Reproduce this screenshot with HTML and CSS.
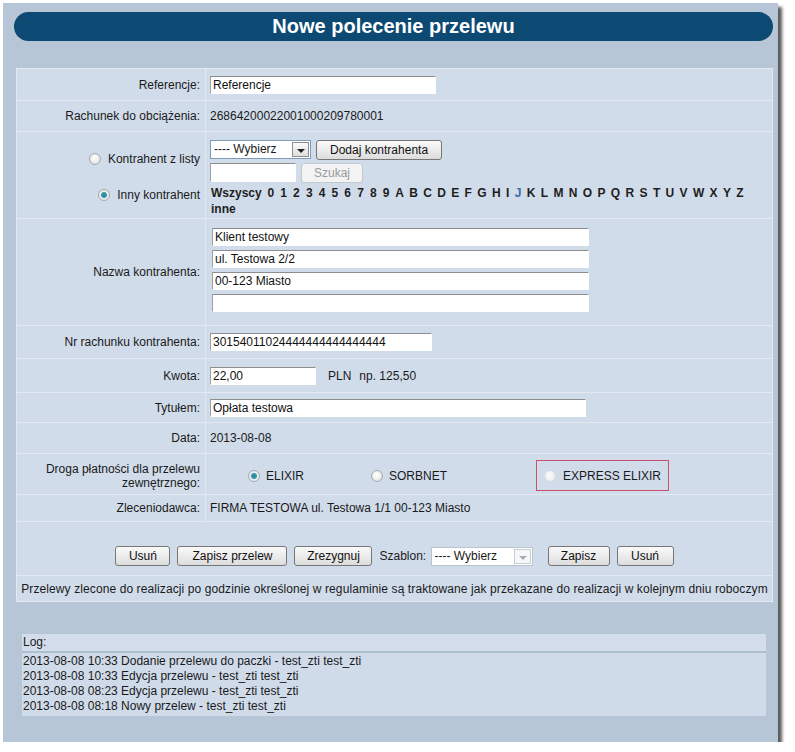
FILE: index.html
```html
<!DOCTYPE html>
<html lang="pl">
<head>
    <meta charset="UTF-8">
    <title>Nowe polecenie przelewu</title>
    <link rel="stylesheet" href="styles.css">
</head>
<body>
<div class="panel">
    <div class="title">Nowe polecenie przelewu</div>

    <table class="form">
        <tr class="h32">
            <td class="lbl">Referencje:</td>
            <td class="val"><input class="txt w-ref" type="text" value="Referencje"></td>
        </tr>
        <tr class="h31">
            <td class="lbl">Rachunek do obciążenia:</td>
            <td class="val">26864200022001000209780001</td>
        </tr>
        <tr class="h87">
            <td class="lbl top">
                <div class="rad-line first"><input type="radio" name="k"> Kontrahent z listy</div>
                <div class="rad-line second"><input type="radio" name="k" checked> Inny kontrahent</div>
            </td>
            <td class="val top">
                <div class="line">
                    <span class="select w-sel"><span class="sel-text">---- Wybierz</span><span class="sel-btn"></span></span>
                    <button class="btn">Dodaj kontrahenta</button>
                </div>
                <div class="line">
                    <input class="txt w-search" type="text">
                    <button class="btn" disabled>Szukaj</button>
                </div>
                <div class="letters">
                    <a>Wszyscy</a> <a class="d">0</a> <a class="d">1</a> <a class="d">2</a> <a class="d">3</a> <a class="d">4</a> <a class="d">5</a> <a class="d">6</a> <a class="d">7</a> <a class="d">8</a> <a class="d">9</a>
                    <a>A</a> <a>B</a> <a>C</a> <a>D</a> <a>E</a> <a>F</a> <a>G</a> <a>H</a> <a>I</a> <a class="visited">J</a>
                    <a>K</a> <a>L</a> <a>M</a> <a>N</a> <a>O</a> <a>P</a> <a>Q</a> <a>R</a> <a>S</a> <a>T</a> <a>U</a>
                    <a>V</a> <a>W</a> <a>X</a> <a>Y</a> <a>Z</a> <a>inne</a>
                </div>
            </td>
        </tr>
        <tr class="h106">
            <td class="lbl">Nazwa kontrahenta:</td>
            <td class="val names">
                <input class="txt w-name" type="text" value="Klient testowy">
                <input class="txt w-name" type="text" value="ul. Testowa 2/2">
                <input class="txt w-name" type="text" value="00-123 Miasto">
                <input class="txt w-name" type="text" value="">
            </td>
        </tr>
        <tr class="h33">
            <td class="lbl">Nr rachunku kontrahenta:</td>
            <td class="val"><input class="txt w-acc" type="text" value="30154011024444444444444444"></td>
        </tr>
        <tr class="h34">
            <td class="lbl">Kwota:</td>
            <td class="val"><input class="txt w-amount" type="text" value="22,00"><span class="cur">PLN</span><span class="hint">np. 125,50</span></td>
        </tr>
        <tr class="h30">
            <td class="lbl">Tytułem:</td>
            <td class="val"><input class="txt w-title" type="text" value="Opłata testowa"></td>
        </tr>
        <tr class="h31">
            <td class="lbl">Data:</td>
            <td class="val">2013-08-08</td>
        </tr>
        <tr class="h41">
            <td class="lbl low">Droga płatności dla przelewu<br>zewnętrznego:</td>
            <td class="val low">
                <div class="pay">
                    <label class="pay-opt o1"><input type="radio" name="p" checked> ELIXIR</label>
                    <label class="pay-opt o2"><input type="radio" name="p"> SORBNET</label>
                    <label class="pay-opt o3 express"><input type="radio" name="p" disabled> EXPRESS ELIXIR</label>
                </div>
            </td>
        </tr>
        <tr class="h27">
            <td class="lbl">Zleceniodawca:</td>
            <td class="val">FIRMA TESTOWA ul. Testowa 1/1 00-123 Miasto</td>
        </tr>
        <tr>
            <td class="actions" colspan="2">
                <div class="action-bar">
                    <button class="btn w55">Usuń</button>
                    <button class="btn w110">Zapisz przelew</button>
                    <button class="btn w78">Zrezygnuj</button>
                    <span class="tpl">Szablon:
                        <span class="select w-tpl off"><span class="sel-text">---- Wybierz</span><span class="sel-btn"></span></span>
                    </span>
                    <button class="btn w62 gap">Zapisz</button>
                    <button class="btn w57">Usuń</button>
                </div>
            </td>
        </tr>
        <tr>
            <td class="notice" colspan="2">Przelewy zlecone do realizacji po godzinie określonej w regulaminie są traktowane jak przekazane do realizacji w kolejnym dniu roboczym</td>
        </tr>
    </table>

    <div class="log">
        <div class="log-head">Log:</div>
        <div class="log-body">
            <div>2013-08-08 10:33 Dodanie przelewu do paczki - test_zti test_zti</div>
            <div>2013-08-08 10:33 Edycja przelewu - test_zti test_zti</div>
            <div>2013-08-08 08:23 Edycja przelewu - test_zti test_zti</div>
            <div>2013-08-08 08:18 Nowy przelew - test_zti test_zti</div>
        </div>
    </div>
</div>
</body>
</html>
```

FILE: styles.css
```css
body {
    margin: 3px;
    background: #fff;
    font-family: "Liberation Sans", Arial, sans-serif;
    font-size: 12px;
    color: #1a1a1a;
}
.panel {
    width: 775px;
    box-sizing: border-box;
    padding: 9px 5px 26px 11px;
    background: #b6c6d6;
    box-shadow: 4px 4px 3px rgba(50, 50, 50, 0.8);
}
.title {
    height: 29px;
    line-height: 29px;
    border-radius: 15px;
    background: #0d4a73;
    color: #fff;
    font-weight: bold;
    font-size: 20px;
    text-align: center;
}
.form {
    margin: 27px 0 0 2px;
    width: 757px;
    border-collapse: collapse;
    background: #d1dcea;
}
.form td {
    border: 1px solid #e2e9f2;
    padding: 0;
    vertical-align: middle;
}
.h27 td { height: 26px; }
.h30 td { height: 29px; }
.h31 td { height: 30px; }
.h32 td { height: 31px; }
.h33 td { height: 32px; }
.h34 td { height: 33px; }
.h41 td { height: 37px; }
.h87 td { height: 86px; }
.h106 td { height: 106px; }
.h106 td.names {
    height: 97px;
    vertical-align: top;
    padding-top: 9px;
}
.lbl {
    width: 183px;
    text-align: right;
    padding-right: 5px !important;
}
.val {
    padding-left: 4px !important;
}
.top {
    vertical-align: top !important;
}
.low {
    padding-top: 3px !important;
}
.txt {
    box-sizing: border-box;
    height: 18px;
    margin: 0;
    padding: 0 2px;
    font: 12px "Liberation Sans", Arial, sans-serif;
    color: #111;
    background: #fff;
    border: 1px solid #fff;
    border-top-color: #8e8e8e;
    border-left-color: #a0a0a0;
}
.w-ref { width: 226px; }
.w-search { width: 86px; height: 19px; }
.w-name { width: 377px; display: block; margin: 0 0 4px 2px; }
.w-name:last-child { margin-bottom: 0; }
.w-acc { width: 222px; }
.w-amount { width: 106px; }
.w-title { width: 376px; }
.cur { margin-left: 12px; }
.hint { margin-left: 8px; }

/* radios */
input[type=radio] {
    appearance: none;
    -webkit-appearance: none;
    width: 12px;
    height: 12px;
    margin: 0 4px 0 0;
    border-radius: 50%;
    border: 1px solid #a4a9ad;
    background: radial-gradient(circle at 45% 40%, #ffffff 0, #f2f2f2 40%, #cfd3d6 100%);
    vertical-align: -2px;
}
input[type=radio]:checked {
    background: radial-gradient(circle at 50% 50%, #2b7e93 0, #3b9ab0 2.5px, #e8eeee 3.6px, #f4f4f4 50%, #cfd3d6 100%);
}
input[type=radio]:disabled {
    border-color: #d6dadd;
    background: radial-gradient(circle at 45% 40%, #fafafa 0, #eef0f2 60%, #dfe3e6 100%);
}
.rad-line { line-height: 16px; }
.rad-line.first { margin-top: 19px; }
.rad-line.second { margin-top: 20px; }

/* select imitation */
.select {
    display: inline-flex;
    box-sizing: border-box;
    height: 19px;
    border: 1px solid #7f9db9;
    background: #fff;
    vertical-align: top;
    text-align: left;
}
.w-sel { width: 101px; }
.w-tpl { width: 102px; margin-left: 1px; vertical-align: middle; border-color: #b9c4cf; }
.sel-text {
    flex: 1;
    line-height: 17px;
    padding-left: 3px;
    white-space: nowrap;
}
.sel-btn {
    position: relative;
    width: 15px;
    margin: 1px;
    border: 1px solid #8e8f8f;
    background: linear-gradient(#fbfbfb, #dedede);
}
.sel-btn::after {
    content: "";
    position: absolute;
    left: 4px;
    top: 6px;
    border-left: 4px solid transparent;
    border-right: 4px solid transparent;
    border-top: 4px solid #222;
}
.off .sel-btn {
    border-color: #c9ced3;
    background: #f6f7f8;
}
.off .sel-btn::after {
    border-top-color: #a7adb3;
}

.btn {
    box-sizing: border-box;
    height: 20px;
    padding: 0 13px;
    margin: 0;
    font: 12px "Liberation Sans", Arial, sans-serif;
    color: #111;
    border: 1px solid #767676;
    border-radius: 3px;
    background: linear-gradient(#fafafa, #ececec 50%, #dcdcdc);
    vertical-align: top;
}
.btn:disabled {
    color: #9a9a9a;
    border-color: #c4c8cc;
    background: #f3f3f3;
    padding: 0 12px;
}
.line {
    height: 19px;
    margin-top: 4px;
    display: flex;
    align-items: flex-start;
    gap: 5px;
}
.line:first-child { margin-top: 8px; }
.letters {
    margin-top: 3px;
    font-weight: bold;
    line-height: 16px;
}
.letters a {
    color: #1e1e1e;
    padding: 0 1px;
}
.letters a.d { padding: 0 1.4px; }
.letters a.visited { color: #3a6ea5; }

.pay {
    display: flex;
    align-items: center;
}
.pay-opt {
    display: flex;
    align-items: center;
    box-sizing: border-box;
}
.pay-opt input { margin-right: 6px; }
.o1 { margin-left: 38px; width: 123px; }
.o2 { width: 165px; }
.express {
    height: 31px;
    width: 133px;
    padding-left: 7px;
    border: 1px solid #c8506a;
}
.express input { margin-right: 7px; }

.actions {
    padding: 24px 0 9px !important;
}
.action-bar {
    display: flex;
    justify-content: center;
    align-items: center;
    gap: 7px;
}
.btn.w55 { width: 55px; padding: 0; }
.btn.w57 { width: 57px; padding: 0; }
.btn.w62 { width: 62px; padding: 0; }
.btn.w78 { width: 78px; padding: 0; }
.btn.w110 { width: 110px; padding: 0; }
.btn.gap { margin-left: 8px; }
.tpl { white-space: nowrap; }
.notice {
    height: 25px;
    text-align: center;
    letter-spacing: 0.1px;
}

.log {
    margin: 32px 7px 0 8px;
    background: #d0dbea;
}
.log-head {
    height: 17px;
    line-height: 17px;
    padding-left: 1px;
    background: #d3ddeb;
    border-bottom: 2px solid #aebfd0;
}
.log-body {
    height: 62px;
    padding: 1px 0 0 1px;
    line-height: 15px;
}
```
